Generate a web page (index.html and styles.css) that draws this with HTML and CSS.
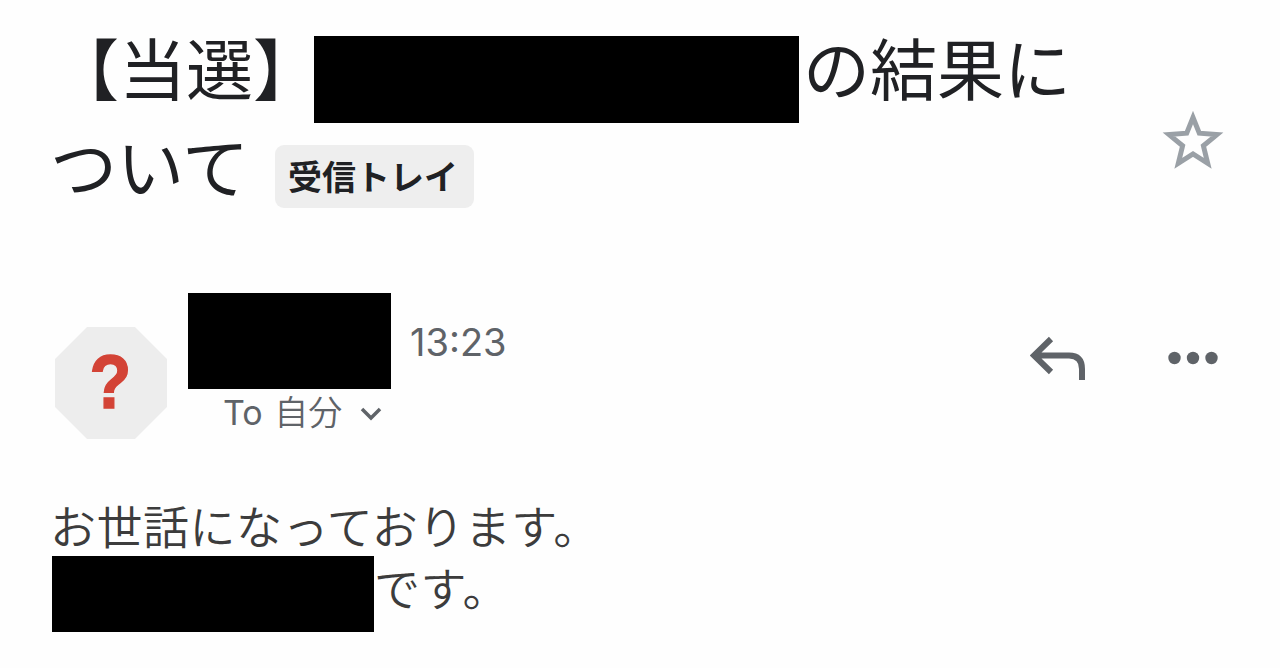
FILE: index.html
```
<!DOCTYPE html>
<html lang="ja">

<head>
    <meta charset="utf-8">
    <title>受信トレイ</title>
    <link rel="stylesheet" href="styles.css">
</head>

<body>

<header class="subject">
    <h1 class="title">
        <div class="title-line"><span>【当選】</span><span class="mask mask-title"></span><span>の結果に</span></div>
        <div class="title-line second"><span>ついて</span><span class="label">受信トレイ</span></div>
    </h1>
    <svg class="star" width="62" height="60" viewBox="0 0 62 60">
        <path d="M31 6.5 L37.3 22.2 L55 23.6 L41.4 34.8 L45.7 52.3 L31 43 L16.3 52.3 L20.6 34.8 L7 23.6 L24.7 22.2 Z"/>
    </svg>
</header>

<section class="sender">
    <svg class="avatar" width="112" height="112" viewBox="0 0 112 112">
        <path class="avatar-bg" d="M32 0 H80 L112 32 V80 L80 112 H32 L0 80 V32 Z"/>
        <text class="avatar-mark" transform="translate(55.5 81) scale(.9 1)" text-anchor="middle">?</text>
    </svg>
    <div class="info">
        <div class="name-row">
            <span class="mask mask-name"></span>
            <span class="time">13:23</span>
        </div>
        <div class="to-row">
            <span class="to">To <span class="me">自分</span></span>
            <svg class="chevron" width="22" height="14" viewBox="0 0 22 14">
                <path d="M2 2 L11 11 L20 2"/>
            </svg>
        </div>
    </div>
    <div class="actions">
        <svg class="reply" width="56" height="46" viewBox="0 0 56 46">
            <path d="M21 3 L4 19.5 L21 36 M4 19.5 H39 Q52 19.5 52 33 V44"/>
        </svg>
        <svg class="more" width="50" height="14" viewBox="0 0 50 14">
            <circle cx="6.5" cy="7" r="6.2"/>
            <circle cx="25" cy="7" r="6.2"/>
            <circle cx="43.5" cy="7" r="6.2"/>
        </svg>
    </div>
</section>

<main class="message">
    <p class="line">お世話になっております。</p>
    <p class="line masked"><span class="mask mask-body"></span>です。</p>
</main>

</body>

</html>
```
FILE: styles.css
```
body {
    margin: 0;
    padding: 36px 0 0 52px;
    background-color: #fefefe;
    font-family: "Noto Sans CJK JP", sans-serif;
    color: #202124;
}

.mask {
    display: block;
    background-color: #000;
}

/* subject */

.subject {
    display: flex;
    height: 257px;
}

.title {
    width: 1110px;
    margin: 0;
    font-size: 67px;
    font-weight: 400;
    line-height: 60px;
    white-space: nowrap;
}

.title-line {
    display: flex;
    height: 87px;
}

.title-line.second {
    margin-left: -2px;
    padding-top: 11px;
}

.mask-title {
    width: 485px;
    height: 87px;
    margin-left: -6px;
    margin-right: 4px;
}

.label {
    width: 186px;
    height: 63px;
    margin: 11px 0 0 26px;
    padding-left: 13px;
    border-radius: 9px;
    background-color: #eee;
    font-size: 34px;
    font-weight: bold;
    line-height: 61px;
}

.star {
    margin-top: 75px;
    fill: none;
    stroke: #9aa0a6;
    stroke-width: 5;
}

/* sender */

.sender {
    display: flex;
    height: 207px;
    color: #5f6368;
}

.avatar {
    margin: 34px 21px 0 3px;
}

.avatar-bg {
    fill: #ededed;
}

.avatar-mark {
    font-family: "Liberation Sans", sans-serif;
    font-size: 76px;
    font-weight: bold;
    fill: #d34336;
    stroke: #d34336;
    stroke-width: 1.5;
}

.info {
    width: 840px;
}

.name-row {
    display: flex;
    height: 96px;
}

.mask-name {
    width: 203px;
}

.time {
    margin-left: 19px;
    font-family: Inter, sans-serif;
    font-size: 38px;
    line-height: 98px;
}

.to-row {
    display: flex;
    align-items: center;
    height: 46px;
    padding-left: 35px;
}

.to {
    font-family: Inter, sans-serif;
    font-size: 34px;
    line-height: 46px;
}

.me {
    margin-left: 2px;
    font-family: "Noto Sans CJK JP", sans-serif;
    font-weight: 350;
}

.chevron {
    margin: 4px 0 0 18px;
    fill: none;
    stroke: #5f6368;
    stroke-width: 3.5;
}

.actions {
    display: flex;
}

.reply {
    margin: 43px 82px 0 2px;
    fill: none;
    stroke: #5f6368;
    stroke-width: 6;
}

.more {
    margin-top: 58px;
    fill: #5f6368;
}

/* message */

.message {
    color: #3c3c3c;
    font-size: 46px;
    font-weight: 350;
    letter-spacing: 0.5px;
}

.line {
    display: flex;
    height: 56px;
    margin: 0 0 0 -2px;
    line-height: 48px;
}

.line.masked {
    height: 76px;
    margin-left: 0;
    line-height: 60px;
}

.mask-body {
    width: 322px;
}
```
